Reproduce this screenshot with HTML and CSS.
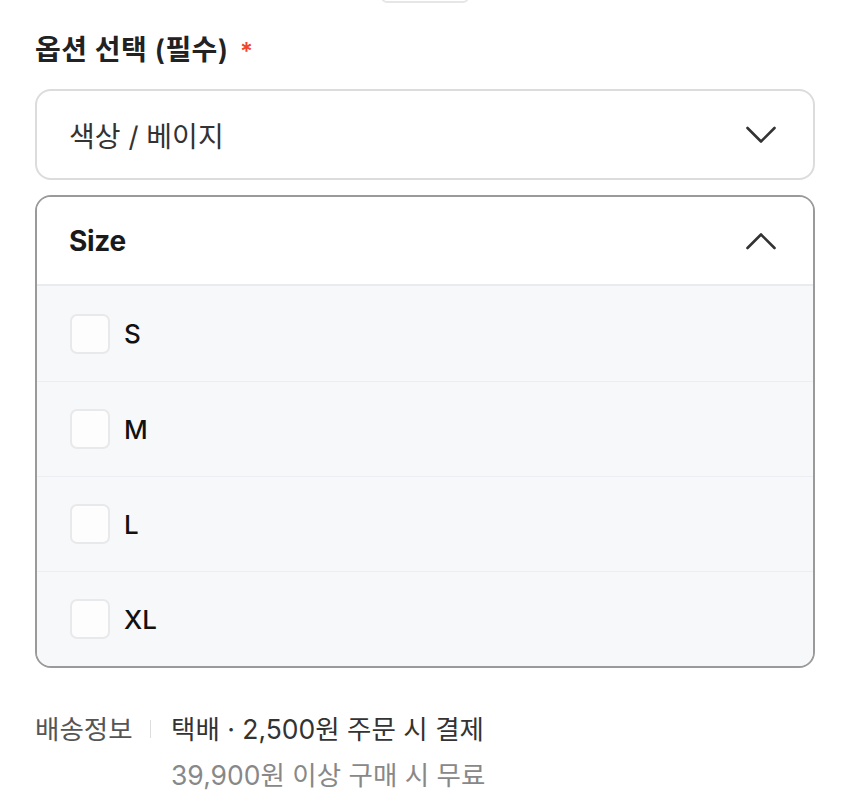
FILE: index.html
```html
<!DOCTYPE html>
<html lang="ko">
<head>
<meta charset="utf-8">
<link rel="stylesheet" href="styles.css">
</head>
<body>
<div class="page">
  <div class="top-handle"></div>
  <div class="label">옵션 선택 (필수) <span class="req">*</span></div>
  <div class="select">
    <span class="select-text">색상 / 베이지</span>
    <svg class="chev" viewBox="0 0 30 18" width="30" height="18"><path d="M1.5 2 L15 15.5 L28.5 2" fill="none" stroke="#333" stroke-width="2.6" stroke-linecap="round" stroke-linejoin="round"/></svg>
  </div>
  <div class="acc">
    <div class="acc-head">
      <span class="acc-title">Size</span>
      <svg class="chev" viewBox="0 0 30 18" width="30" height="18"><path d="M1.5 16 L15 2.5 L28.5 16" fill="none" stroke="#333" stroke-width="2.6" stroke-linecap="round" stroke-linejoin="round"/></svg>
    </div>
    <div class="acc-body">
      <label class="row"><span class="box"></span><span class="opt">S</span></label>
      <label class="row"><span class="box"></span><span class="opt">M</span></label>
      <label class="row"><span class="box"></span><span class="opt">L</span></label>
      <label class="row"><span class="box"></span><span class="opt">XL</span></label>
    </div>
  </div>
  <div class="ship">
    <div class="ship-key">배송정보</div>
    <div class="ship-sep"></div>
    <div class="ship-val">
      <div class="ship-main">택배 · 2,500원 주문 시 결제</div>
      <div class="ship-sub">39,900원 이상 구매 시 무료</div>
    </div>
  </div>
</div>
</body>
</html>
```

FILE: styles.css
```css
* { box-sizing: border-box; }
html, body { margin: 0; padding: 0; background: #fff; }
body {
  font-family: Inter, "Noto Sans CJK KR", sans-serif;
  color: #222;
  overflow: hidden;
}
.page {
  padding: 0 35px;
  position: relative;
}
.top-handle {
  position: absolute;
  left: 381px;
  top: -20px;
  width: 88px;
  height: 23px;
  border-radius: 6px;
  background: #fff;
  border: 2px solid #e6e6e6;
}
.label {
  padding-top: 32px;
  height: 89px;
  font-size: 28px;
  line-height: 36px;
  font-weight: 600;
  color: #222;
  letter-spacing: 0.4px;
}
.req {
  color: #f0452f;
  font-size: 24px;
  margin-left: 4px;
}
.select {
  height: 91px;
  border: 2px solid #dcdcdc;
  border-radius: 16px;
  display: flex;
  align-items: center;
  justify-content: space-between;
  padding: 0 37px 0 32px;
}
.select-text {
  font-size: 28px;
  color: #333;
}
.chev { display: block; }
.acc {
  margin-top: 15px;
  border: 2px solid #9a9a9a;
  border-radius: 16px;
  overflow: hidden;
}
.acc-head {
  height: 89px;
  display: flex;
  align-items: center;
  justify-content: space-between;
  padding: 0 37px 0 32px;
  background: #fff;
  border-bottom: 2px solid #e9ebee;
}
.acc-title {
  font-size: 28px;
  font-weight: 700;
  color: #1a1a1a;
  letter-spacing: -0.3px;
}
.acc-body { background: #f7f8fa; }
.row {
  height: 95px;
  display: flex;
  align-items: center;
  padding-left: 33px;
  gap: 14px;
  border-top: 1px solid #edeef1;
}
.row:first-child { border-top: none; }
.box {
  width: 40px;
  height: 40px;
  border: 2px solid #e8e9eb;
  border-radius: 7px;
  background: #fdfdfe;
}
.opt {
  font-size: 26px;
  color: #111;
  font-weight: 500;
}
.ship {
  margin-top: 38px;
  display: flex;
  align-items: flex-start;
  font-size: 26.5px;
  line-height: 46px;
}
.ship-key { color: #555; width: 115px; }
.ship-sep {
  width: 1px;
  height: 18px;
  background: #ddd;
  margin-top: 14px;
  margin-right: 20px;
}
.ship-main { color: #333; }
.ship-sub { color: #888; }
```
